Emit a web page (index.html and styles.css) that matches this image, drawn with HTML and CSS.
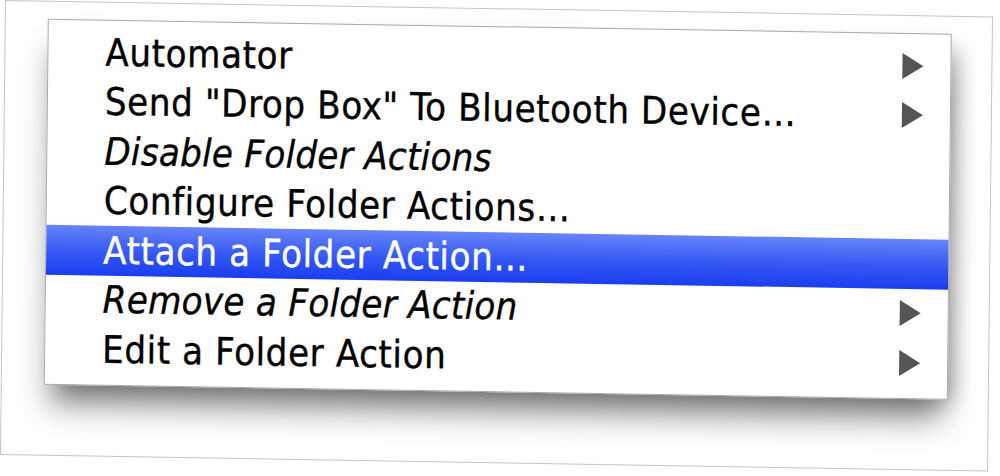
FILE: index.html
```html
<!DOCTYPE html>
<html>
<head>
<meta charset="utf-8">
<link rel="stylesheet" href="styles.css">
</head>
<body>
<div class="scene">
  <div class="menu">
    <div class="row"><span class="label">Automator</span><span class="arrow"></span></div>
    <div class="row"><span class="label">Send "Drop Box" To Bluetooth Device…</span><span class="arrow"></span></div>
    <div class="row"><span class="label slant">Disable Folder Actions</span></div>
    <div class="row"><span class="label">Configure Folder Actions…</span></div>
    <div class="row selected"><span class="label">Attach a Folder Action…</span></div>
    <div class="row"><span class="label slant">Remove a Folder Action</span><span class="arrow"></span></div>
    <div class="row"><span class="label">Edit a Folder Action</span><span class="arrow"></span></div>
  </div>
</div>
</body>
</html>
```

FILE: styles.css
```css
html, body {
  margin: 0;
  padding: 0;
  background: #ffffff;
  width: 1000px;
  height: 476px;
  overflow: hidden;
}

.scene {
  margin-left: 5px;
  width: 988px;
  height: 455px;
  box-sizing: border-box;
  border: 1px solid #c4c4c4;
  padding: 17px 0 0 42px;
  transform: matrix(1, 0.0166, -0.011, 1, 0, 0);
  transform-origin: 0 0;
}

.menu {
  width: 904px;
  height: 366px;
  box-sizing: border-box;
  border: 1px solid #a8a8a8;
  background: #ffffff;
  padding-top: 7px;
  box-shadow: 0 26px 30px -6px rgba(0, 0, 0, 0.45), 12px 8px 20px -6px rgba(0, 0, 0, 0.25);
  font-family: "DejaVu Sans Condensed", "DejaVu Sans", sans-serif;
  font-size: 38px;
  line-height: 34px;
  letter-spacing: 0.6px;
  color: #000000;
  -webkit-text-stroke: 0.35px currentColor;
}

.row {
  height: 49.5px;
  display: flex;
  align-items: center;
  justify-content: space-between;
  padding: 0 27px 0 57px;
}

.label {
  white-space: nowrap;
}

.slant {
  font-style: oblique;
  letter-spacing: 0.3px;
}

.selected {
  background: linear-gradient(#6784f8, #3457f4 55%, #1a3ef0);
  color: #ffffff;
}

.arrow {
  width: 0;
  height: 0;
  border-top: 13px solid transparent;
  border-bottom: 13px solid transparent;
  border-left: 21px solid #555555;
}
```
